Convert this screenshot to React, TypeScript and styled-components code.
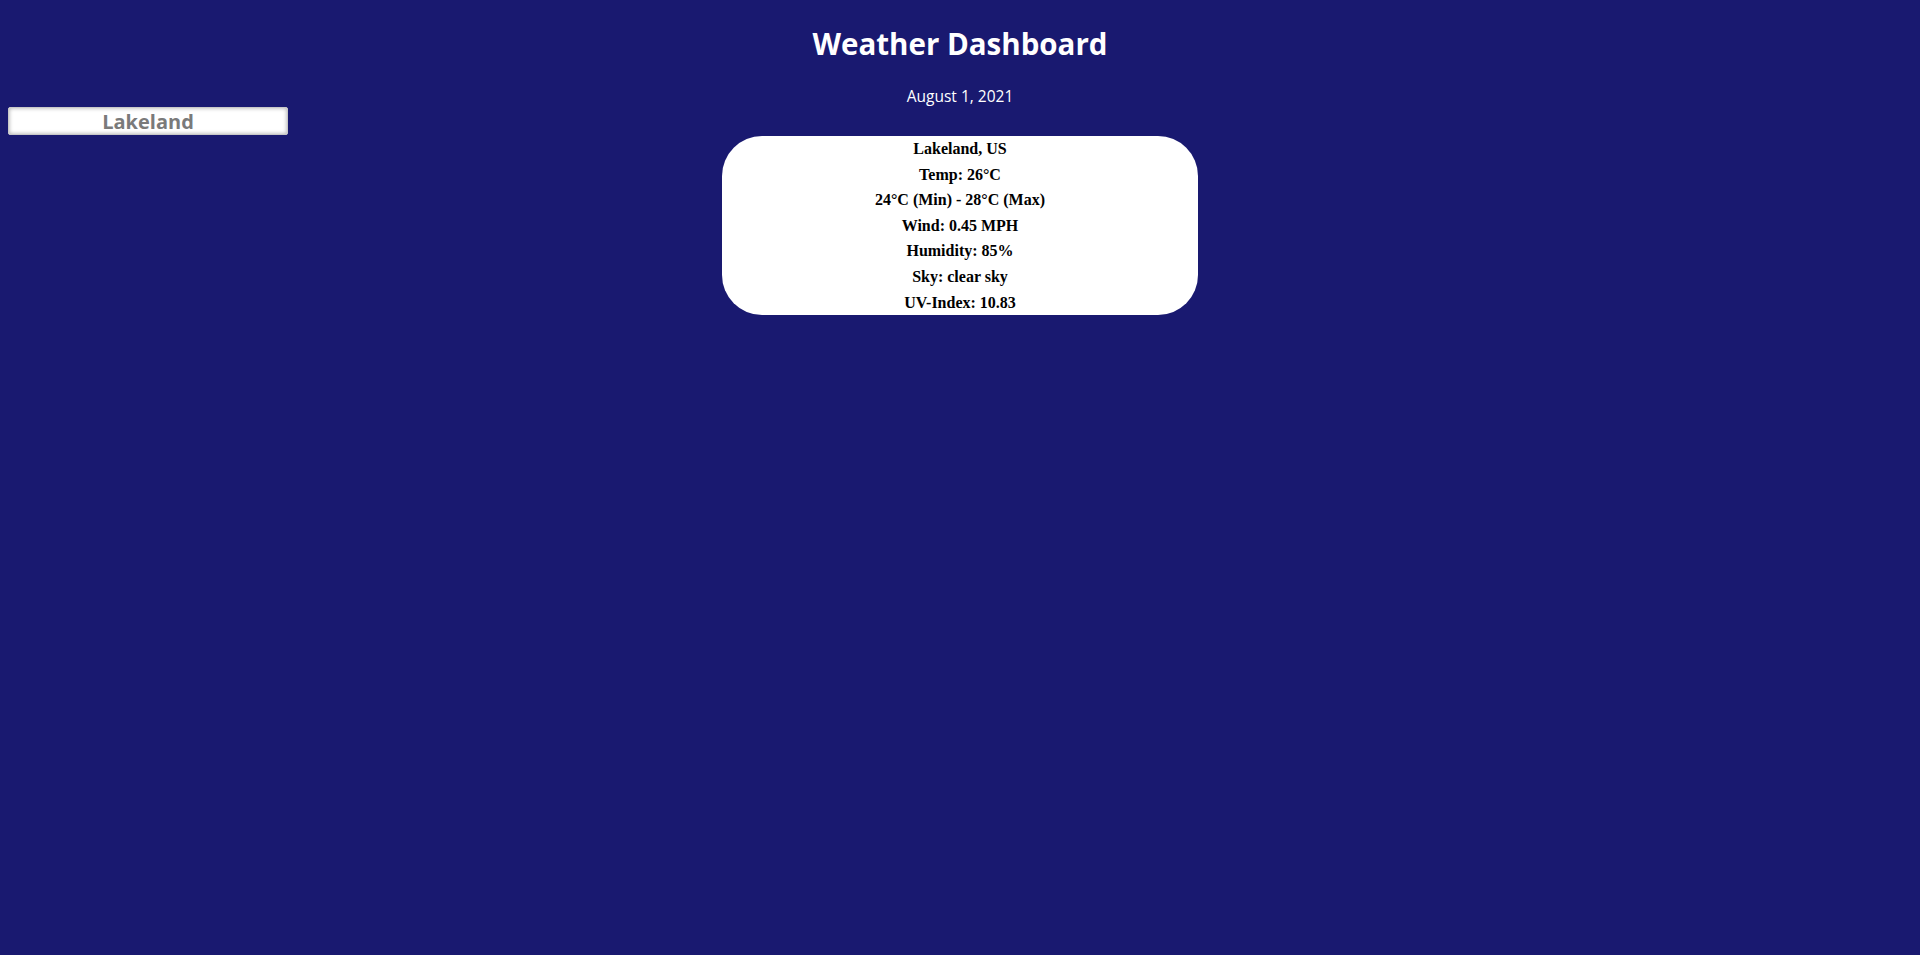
import React from "react";
import styled, { createGlobalStyle } from "styled-components";

const Global = createGlobalStyle`
  html, body { background: #191970; }
  body { margin: 8px; font-family: "Open Sans", "Noto Sans", sans-serif; }
`;

const Page = styled.div`
  display: flex;
  flex-direction: column;
  align-items: stretch;
`;

const Title = styled.h1`
  margin: 14px 0 0;
  height: 44px;
  line-height: 44px;
  text-align: center;
  color: #ffffff;
  font-family: "Open Sans", sans-serif;
  font-weight: 700;
  font-size: 29.5px;
`;

const DateLine = styled.div`
  margin-top: 19px;
  height: 22px;
  line-height: 22px;
  text-align: center;
  color: #ffffff;
  font-family: "Open Sans", sans-serif;
  font-size: 15.5px;
`;

const SearchRow = styled.div`
  display: flex;
`;

const SearchInput = styled.input`
  box-sizing: border-box;
  width: 280px;
  height: 28px;
  padding: 0;
  border: 1px solid #c8c8c8;
  border-radius: 2px;
  background: #ffffff;
  box-shadow: inset 0 0 4px rgba(0, 0, 0, 0.35);
  text-align: center;
  color: #7a7a7a;
  font-family: "Open Sans", sans-serif;
  font-weight: 700;
  font-size: 20px;
  outline: none;
`;

const Card = styled.div`
  align-self: center;
  margin-top: 1px;
  width: 476px;
  height: 179px;
  background: #ffffff;
  border-radius: 40px;
  display: flex;
  flex-direction: column;
  align-items: center;
`;

const Line = styled.div`
  height: 25.6px;
  line-height: 25.6px;
  font-family: "Liberation Serif", "Times New Roman", serif;
  font-weight: 700;
  font-size: 16px;
  color: #000000;
`;

const lines = [
  "Lakeland, US",
  "Temp: 26°C",
  "24°C (Min) - 28°C (Max)",
  "Wind: 0.45 MPH",
  "Humidity: 85%",
  "Sky: clear sky",
  "UV-Index: 10.83",
];

export default function App() {
  return (
    <Page>
      <Global />
      <Title>Weather Dashboard</Title>
      <DateLine>August 1, 2021</DateLine>
      <SearchRow>
        <SearchInput defaultValue="Lakeland" />
      </SearchRow>
      <Card>
        {lines.map((l) => (
          <Line key={l}>{l}</Line>
        ))}
      </Card>
    </Page>
  );
}
